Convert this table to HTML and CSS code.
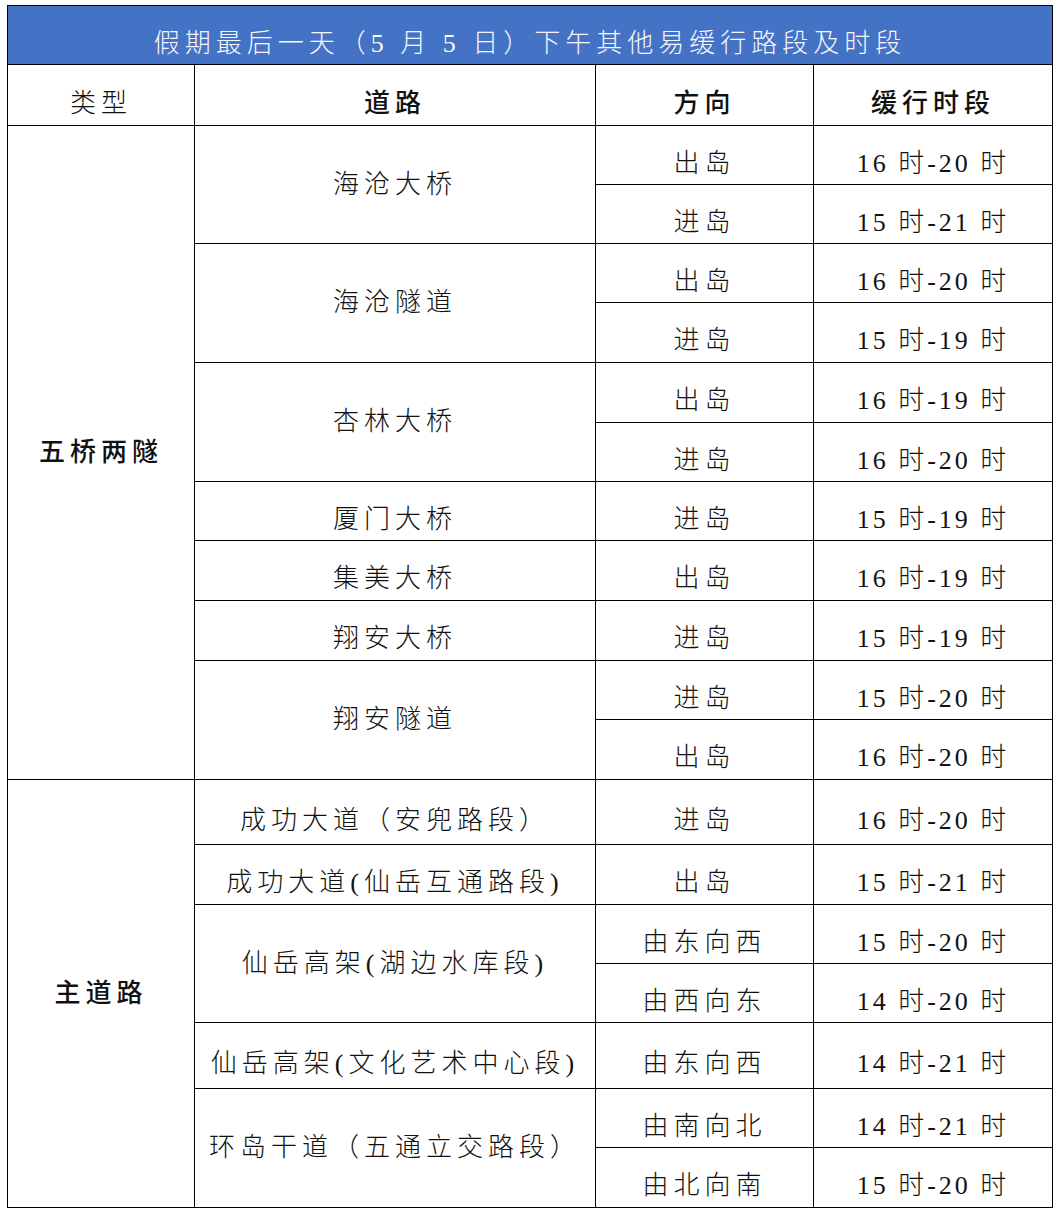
FILE: index.html
```html
<!DOCTYPE html>
<html lang="zh-CN">
<head>
<meta charset="utf-8">
<title>假期最后一天下午其他易缓行路段及时段</title>
<link rel="stylesheet" href="styles.css">
</head>
<body>
<table class="grid">
  <colgroup>
    <col class="c-type">
    <col class="c-road">
    <col class="c-dir">
    <col class="c-time">
  </colgroup>
  <thead>
    <tr class="h59"><th colspan="4" class="title">假期最后一天（5 月 5 日）下午其他易缓行路段及时段</th></tr>
    <tr class="h61">
      <th class="hd">类型</th>
      <th class="hd b">道路</th>
      <th class="hd b">方向</th>
      <th class="hd b">缓行时段</th>
    </tr>
  </thead>
  <tbody>
    <tr class="h59"><td rowspan="11" class="cat">五桥两隧</td><td rowspan="2" class="mid">海沧大桥</td><td>出岛</td><td class="t">16 时-20 时</td></tr>
    <tr class="h59"><td>进岛</td><td class="t">15 时-21 时</td></tr>
    <tr class="h59"><td rowspan="2" class="mid">海沧隧道</td><td>出岛</td><td class="t">16 时-20 时</td></tr>
    <tr class="h60"><td>进岛</td><td class="t">15 时-19 时</td></tr>
    <tr class="h60"><td rowspan="2" class="mid">杏林大桥</td><td>出岛</td><td class="t">16 时-19 时</td></tr>
    <tr class="h59"><td>进岛</td><td class="t">16 时-20 时</td></tr>
    <tr class="h59"><td>厦门大桥</td><td>进岛</td><td class="t">15 时-19 时</td></tr>
    <tr class="h60"><td>集美大桥</td><td>出岛</td><td class="t">16 时-19 时</td></tr>
    <tr class="h60"><td>翔安大桥</td><td>进岛</td><td class="t">15 时-19 时</td></tr>
    <tr class="h59"><td rowspan="2" class="mid">翔安隧道</td><td>进岛</td><td class="t">15 时-20 时</td></tr>
    <tr class="h60"><td>出岛</td><td class="t">16 时-20 时</td></tr>
    <tr class="h65"><td rowspan="7" class="cat">主道路</td><td>成功大道（安兜路段）</td><td>进岛</td><td class="t">16 时-20 时</td></tr>
    <tr class="h60"><td>成功大道(仙岳互通路段)</td><td>出岛</td><td class="t">15 时-21 时</td></tr>
    <tr class="h59"><td rowspan="2" class="mid">仙岳高架(湖边水库段)</td><td>由东向西</td><td class="t">15 时-20 时</td></tr>
    <tr class="h59"><td>由西向东</td><td class="t">14 时-20 时</td></tr>
    <tr class="h66"><td>仙岳高架(文化艺术中心段)</td><td>由东向西</td><td class="t">14 时-21 时</td></tr>
    <tr class="h59"><td rowspan="2" class="mid">环岛干道（五通立交路段）</td><td>由南向北</td><td class="t">14 时-21 时</td></tr>
    <tr class="h60"><td>由北向南</td><td class="t">15 时-20 时</td></tr>
  </tbody>
</table>
</body>
</html>
```

FILE: styles.css
```css
html, body {
  margin: 0;
  padding: 0;
  background: #ffffff;
}

body {
  padding: 5px 0 0 7px;
  font-family: "Liberation Serif", "Noto Sans CJK SC", serif;
  color: #111111;
}

.grid {
  border-collapse: collapse;
  table-layout: fixed;
  width: 1045px;
}

.c-type { width: 187px; }
.c-road { width: 401px; }
.c-dir  { width: 218px; }
.c-time { width: 239px; }

.grid th,
.grid td {
  border: 1.5px solid #000000;
  padding: 17px 0 0 0;
  text-align: center;
  vertical-align: middle;
  font-size: 26px;
  font-weight: 300;
  letter-spacing: 5px;
  white-space: nowrap;
  line-height: 30px;
  box-sizing: border-box;
}

.grid td.mid,
.grid td.cat {
  padding-top: 0;
}

.grid td.cat {
  font-weight: 500;
}

.grid td.t {
  letter-spacing: 3px;
}

.grid th.title {
  background: #4472c4;
  color: #f4f6fb;
  font-weight: 300;
  letter-spacing: 5px;
}

.grid th.hd.b {
  font-weight: 500;
}

.h59 { height: 59px; }
.h60 { height: 60px; }
.h61 { height: 61px; }
.h65 { height: 65px; }
.h66 { height: 66px; }
```
